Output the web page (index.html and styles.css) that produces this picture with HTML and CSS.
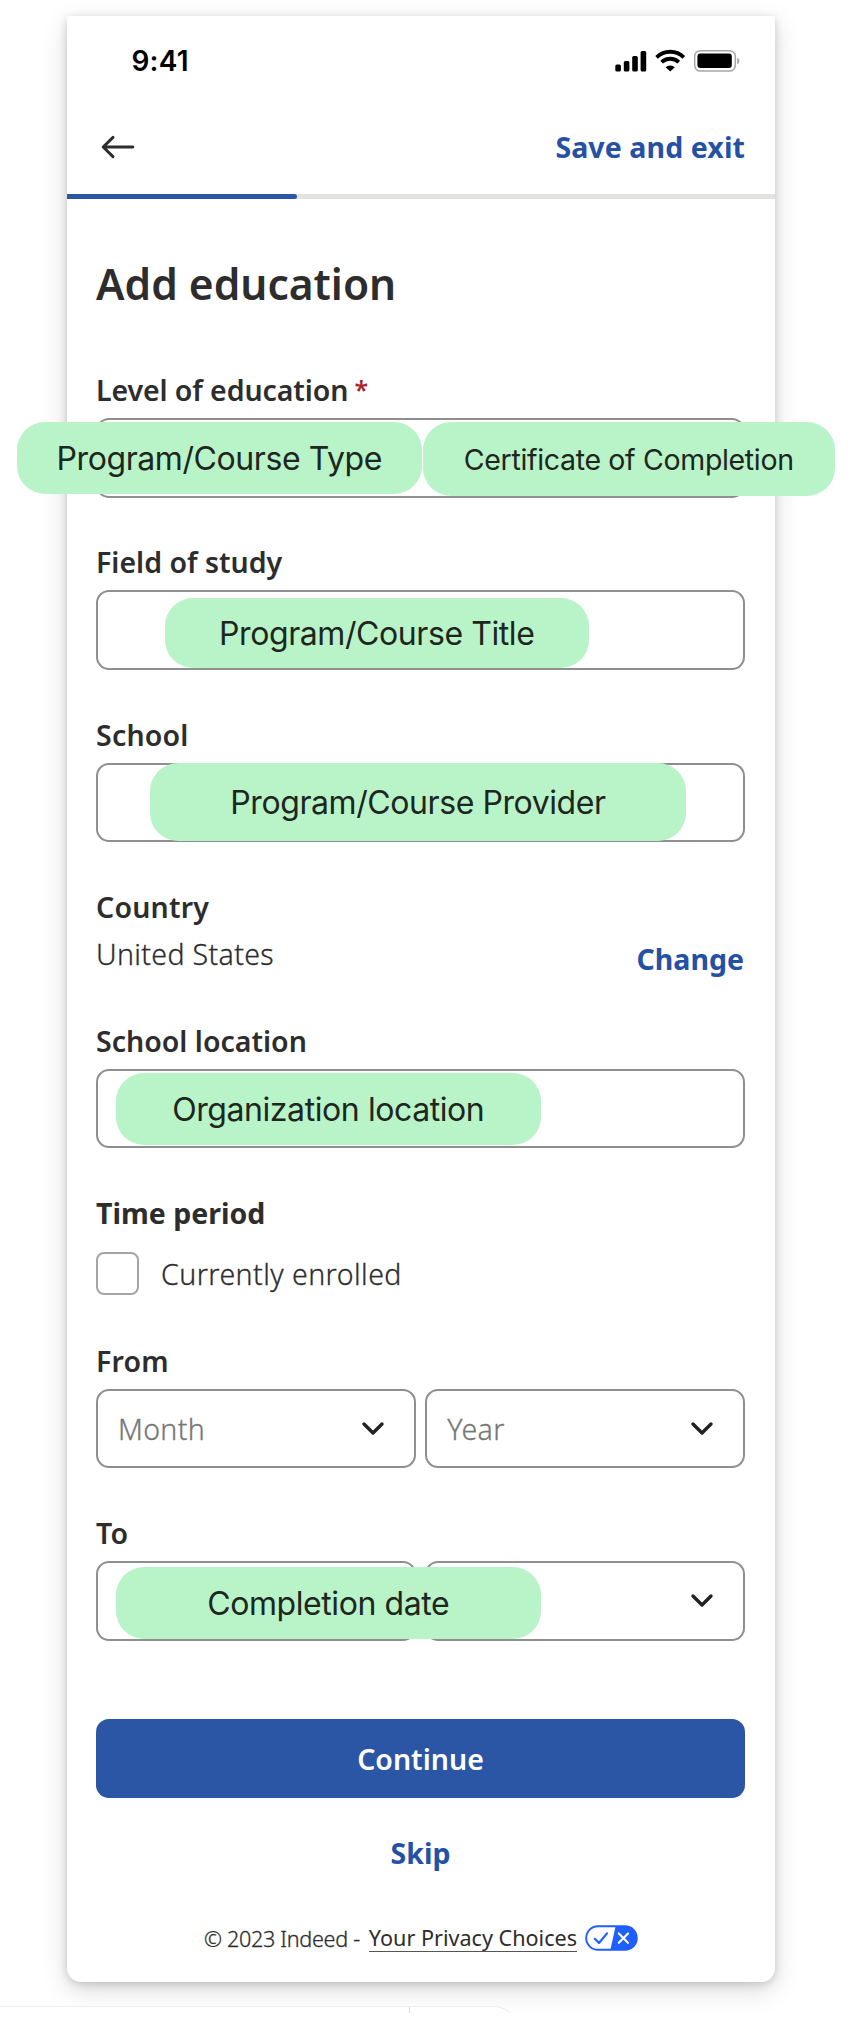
FILE: index.html
```html
<!DOCTYPE html>
<html lang="en">
<head>
<meta charset="utf-8">
<title>Add education</title>
<link rel="stylesheet" href="styles.css">
</head>
<body>
<main class="card">
  <div class="status">
    <span class="time">9:41</span>
    <svg class="status-icons" width="126" height="24" viewBox="0 0 126 24">
      <rect x="0.3" y="15.5" width="5.6" height="7" rx="1.6"/>
      <rect x="8.8" y="12" width="5.6" height="10.5" rx="1.6"/>
      <rect x="17.2" y="7" width="5.6" height="15.5" rx="1.6"/>
      <rect x="25.6" y="2" width="5.6" height="20.5" rx="1.6"/>
      <g fill="none" stroke="#000" stroke-width="3.8">
        <path d="M41.6 8.3a19.4 19.4 0 0 1 27.2 0"/>
        <path d="M46.6 13.2a12.4 12.4 0 0 1 17.2 0"/>
      </g>
      <path d="M50.6 18.2a6.8 6.8 0 0 1 9.2 0L55.2 22.6z"/>
      <rect x="79.7" y="1.7" width="40.6" height="20.4" rx="5.6" fill="none" stroke="#a6a6a6" stroke-width="1.5"/>
      <rect x="82.4" y="4.6" width="34.4" height="14.4" rx="3"/>
      <path d="M122.2 8.8v6.6a3.6 3.6 0 0 0 0-6.6z" fill="#a6a6a6"/>
    </svg>
  </div>
  <header class="nav">
    <svg class="back" width="34" height="24" viewBox="0 0 34 24"><path d="M12 2.4 2.2 12 12 21.6M2.6 12H31.8"/></svg>
    <a class="link save">Save and exit</a>
  </header>
  <div class="progress"><div class="progress-fill"></div></div>
  <form class="form">
    <h1 class="title"><span>Add education</span></h1>

    <div class="field">
      <label class="label l-level">Level of education <span class="req">*</span></label>
      <div class="input">
        <span class="pill p-type"><span>Program/Course Type</span></span>
        <span class="pill p-cert"><span>Certificate of Completion</span></span>
      </div>
    </div>
    <div class="field">
      <label class="label">Field of study</label>
      <div class="input"><span class="pill p-title"><span>Program/Course Title</span></span></div>
    </div>
    <div class="field">
      <label class="label l-school">School</label>
      <div class="input"><span class="pill p-provider"><span>Program/Course Provider</span></span></div>
    </div>

    <div class="country">
      <div>
        <div class="label l-school">Country</div>
        <div class="text states">United States</div>
      </div>
      <a class="link change">Change</a>
    </div>

    <div class="field">
      <label class="label">School location</label>
      <div class="input"><span class="pill p-org"><span>Organization location</span></span></div>
    </div>

    <div class="period">
      <div class="label l-time">Time period</div>
      <div class="check"><span class="box"></span><span class="text enrolled">Currently enrolled</span></div>
    </div>

    <div class="field">
      <label class="label l-school">From</label>
      <div class="selects">
        <div class="select"><span class="text">Month</span><svg class="chev" width="24" height="16" viewBox="0 0 24 16"><path d="m3 3 9 9 9-9"/></svg></div>
        <div class="select"><span class="text">Year</span><svg class="chev" width="24" height="16" viewBox="0 0 24 16"><path d="m3 3 9 9 9-9"/></svg></div>
      </div>
    </div>
    <div class="field">
      <label class="label l-school">To</label>
      <div class="selects">
        <div class="select"></div>
        <div class="select"><svg class="chev" width="24" height="16" viewBox="0 0 24 16"><path d="m3 3 9 9 9-9"/></svg></div>
        <span class="pill p-date"><span>Completion date</span></span>
      </div>
    </div>

    <div class="button"><span>Continue</span></div>
    <a class="link skip">Skip</a>
  </form>
  <footer class="footer">
    <span class="copy">© 2023 Indeed -</span>
    <a class="privacy">Your Privacy Choices</a>
    <svg class="choices" width="53" height="26" viewBox="0 0 53 26">
      <rect x="1.2" y="1.2" width="50.6" height="23.6" rx="11.8" fill="#fff" stroke="#1f5eff" stroke-width="1.9"/>
      <path d="M30.6 1.2H40a11.8 11.8 0 0 1 0 23.6H25.4z" fill="#1f5eff"/>
      <path d="m9.8 13.8 4.2 4.2 8-9.6" fill="none" stroke="#1f5eff" stroke-width="2.2" stroke-linecap="round" stroke-linejoin="round"/>
      <path d="m33.8 8.4 9.2 9.4M43 8.4l-9.2 9.4" stroke="#fff" stroke-width="2.1" stroke-linecap="round"/>
    </svg>
  </footer>
</main>
<div class="toolbar"><div class="toolbar-body"><span class="divider"></span></div></div>
</body>
</html>
```
FILE: styles.css
```css
* { box-sizing: border-box; }
body {
  margin: 0;
  height: 2022px;
  overflow: hidden;
  position: relative;
  background: #fff;
  color: #2d2d2d;
  font: 600 28.5px/32px "Noto Sans", sans-serif;
}
span, a, label { white-space: nowrap; }
.card {
  width: 707.5px;
  height: 1965.5px;
  margin: 16px 0 0 67px;
  background: #fff;
  border-radius: 0 0 14px 14px;
  box-shadow: 0 8px 26px rgba(0,0,0,.15), 0 2px 8px rgba(0,0,0,.16);
}
.status {
  display: flex;
  justify-content: space-between;
  align-items: flex-start;
  height: 103px;
  padding: 33px 34px 0 64.5px;
}
.time { font: 600 28px/24px Inter, sans-serif; letter-spacing: .2px; color: #000; }
.status-icons { display: block; }
.nav {
  display: flex;
  justify-content: space-between;
  height: 74.5px;
  padding: 11.5px 29.5px 0 33.5px;
}
.back { margin-top: 4px; fill: none; stroke: #2d2d2d; stroke-width: 3; stroke-linecap: round; stroke-linejoin: round; }
.link { color: #2551a5; font-weight: 700; }
.save { letter-spacing: .1px; }
.progress { height: 5.5px; background: #e4e2e0; }
.progress-fill { width: 230px; height: 100%; background: #2b55a5; border-radius: 0 3px 3px 0; }
.form { padding: 0 29.5px 0 29px; }
.title { margin: 0; padding-top: 60px; height: 175px; font-size: 42.5px; line-height: 49px; font-weight: 600; }
.field { height: 172.3px; }
.label { display: block; height: 32px; margin-bottom: 12px; font-weight: 600; }
.l-level { letter-spacing: -.1px; }
.l-school { letter-spacing: .2px; }
.l-time { font-weight: 700; }
.req { margin-left: -1px; font-size: 25px; line-height: 0; vertical-align: 2px; color: #a9252b; }
.input, .select { height: 79.5px; border: 2px solid #8f8f8f; border-radius: 13px; }
.input, .selects { position: relative; }
.pill {
  position: absolute;
  display: flex;
  align-items: center;
  justify-content: center;
  padding-top: 2px;
  border-radius: 28px;
  background: #b9f3c8;
  color: #1e2620;
  font: 400 32px/38px Inter, sans-serif;
  letter-spacing: -.42px;
}
.p-type { left: -81px; top: 2px; width: 404.5px; height: 72px; }
.p-cert { left: 324.5px; top: 2px; width: 412.5px; height: 74px; font-size: 28.5px; letter-spacing: -.33px; }
.p-title { left: 66.5px; top: 5.5px; width: 424.5px; height: 70px; }
.p-provider { left: 52px; top: -2px; width: 536px; height: 78px; }
.p-org { left: 18px; top: 2px; width: 424.5px; height: 72.5px; }
.p-date { left: 20px; top: 5.5px; width: 424.5px; height: 72px; }
.country { display: flex; justify-content: space-between; height: 133.7px; }
.country .label { margin-bottom: 15.5px; }
.text { font-weight: 300; letter-spacing: .35px; -webkit-text-stroke: .3px currentColor; }
.enrolled { letter-spacing: .45px; }
.change { padding: 52.5px 1px 0 0; }
.period { height: 148px; }
.check { display: flex; align-items: center; gap: 22px; margin-top: 23.5px; }
.period .label { margin-bottom: 0; }
.box { width: 43px; height: 43px; border: 2px solid #a5a5a5; border-radius: 8px; }
.selects { display: flex; gap: 9.5px; }
.select { flex: 1; display: flex; align-items: center; justify-content: space-between; padding: 0 29px 0 20px; color: #767676; }
.chev { margin-left: auto; fill: none; stroke: #222; stroke-width: 3.4; stroke-linecap: round; stroke-linejoin: round; }
.button {
  display: flex;
  align-items: center;
  justify-content: center;
  height: 79px;
  margin-top: 30px;
  border-radius: 13px;
  background: #2b55a5;
  color: #fff;
}
.skip { display: block; text-align: center; margin-top: 38.5px; }
.footer {
  display: flex;
  align-items: flex-start;
  justify-content: center;
  margin-top: 56px;
  font: 400 21.6px/28px "Noto Sans", sans-serif;
}
.copy { margin-right: 9px; font-weight: 300; letter-spacing: -.3px; -webkit-text-stroke: .3px currentColor; }
.privacy { border-bottom: 1.5px solid #555; line-height: 26px; }
.choices { margin-left: 7.5px; }
.toolbar { position: absolute; left: 0; top: 2006px; width: 850px; height: 16px; overflow: hidden; }
.toolbar::after { content: ""; position: absolute; inset: 7px 0 0; background: #fff; }
.toolbar-body { width: 518px; height: 40px; border: 1px solid #eee; border-left: 0; border-radius: 0 24px 0 0; background: #fff; }
.divider { display: block; width: 1px; height: 7px; margin-left: 409px; background: #ddd; }
```
